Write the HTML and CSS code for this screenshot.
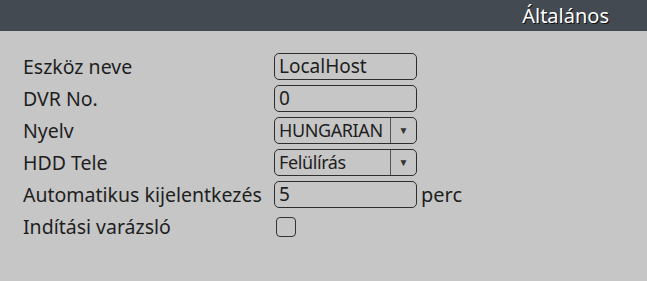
FILE: index.html
```html
<!DOCTYPE html>
<html lang="hu">
<head>
    <meta charset="UTF-8">
    <title>Általános</title>
    <link rel="stylesheet" href="styles.css">
</head>
<body>
    <div class="titleBar">Általános</div>

    <div class="form">
        <div class="row">
            <span class="label">Eszköz neve</span>
            <div class="field">LocalHost</div>
        </div>
        <div class="row">
            <span class="label">DVR No.</span>
            <div class="field">0</div>
        </div>
        <div class="row">
            <span class="label">Nyelv</span>
            <div class="field select"><span class="value">HUNGARIAN</span><span class="arrow">&#9660;</span></div>
        </div>
        <div class="row">
            <span class="label">HDD Tele</span>
            <div class="field select"><span class="value">Felülírás</span><span class="arrow">&#9660;</span></div>
        </div>
        <div class="row">
            <span class="label">Automatikus kijelentkezés</span>
            <div class="field">5</div>
            <span class="unit">perc</span>
        </div>
        <div class="row">
            <span class="label">Indítási varázsló</span>
            <div class="check"></div>
        </div>
    </div>
</body>
</html>
```

FILE: styles.css
```css
body {
    margin: 0;
    background: #c6c6c6;
    font-family: "Noto Sans", sans-serif;
    font-size: 19.5px;
    color: #1e1e1e;
}

.titleBar {
    height: 31px;
    line-height: 31px;
    background: #434a52;
    color: white;
    text-align: right;
    padding-right: 38px;
    font-size: 20px;
    text-shadow: 1px 1px 0 #111;
}

.form {
    padding: 22px 0 0 23px;
    display: flex;
    flex-direction: column;
    gap: 5px;
}

.row {
    display: flex;
    align-items: center;
    height: 27px;
}

.label {
    width: 251px;
    white-space: nowrap;
}

.field {
    box-sizing: border-box;
    width: 143px;
    height: 27px;
    border: 1px solid #2e2e2e;
    border-radius: 5px;
    padding-left: 4px;
    line-height: 25px;
    font-size: 19px;
    display: flex;
    white-space: nowrap;
    overflow: hidden;
}

.select .value {
    flex: 1;
    min-width: 0;
    overflow: hidden;
    font-size: 18px;
    letter-spacing: -0.4px;
}

.arrow {
    width: 25px;
    flex: none;
    border-left: 1px solid #555;
    text-align: center;
    font-size: 10px;
    color: #333;
}

.unit {
    margin-left: 4px;
    font-size: 20px;
}

.check {
    box-sizing: border-box;
    width: 20px;
    height: 20px;
    margin-left: 2px;
    border: 1px solid #333;
    border-radius: 4px;
}
```
